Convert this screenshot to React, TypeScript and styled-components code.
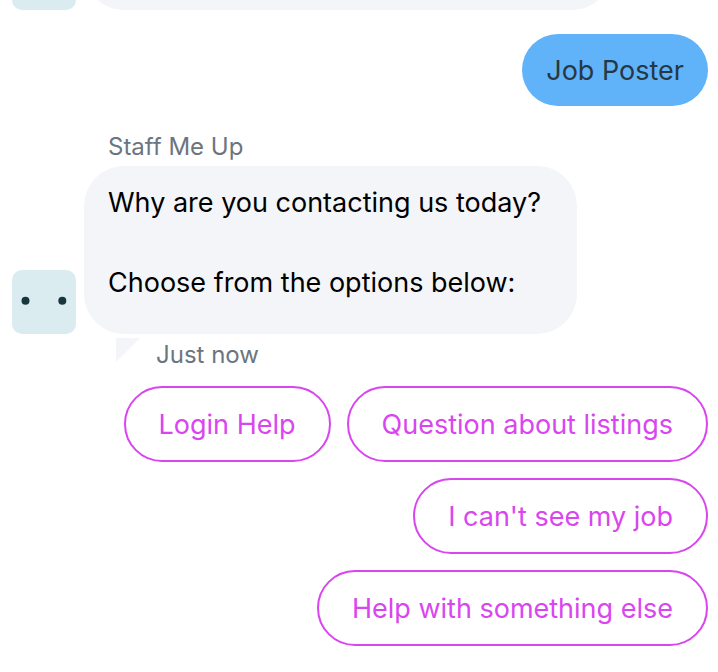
import React from "react";
import styled, { createGlobalStyle } from "styled-components";

const GlobalStyle = createGlobalStyle`
  * { box-sizing: border-box; }
  body { margin: 0; background: #fff; font-family: Inter, "Liberation Sans", sans-serif; }
`;

const Chat = styled.main`
  padding: 0 10px 24px 12px;
  overflow: hidden;
`;

const BotRow = styled.div`
  display: flex;
  align-items: flex-end;
  gap: 8px;
`;

const PreviousRow = styled(BotRow)`
  height: 10px;
`;

const Avatar = styled.div`
  width: 64px;
  height: 64px;
  flex: none;
  border-radius: 10px;
  background: #daecf0;
`;

const BotBubble = styled.div`
  padding: 17px 36px 31px 24px;
  border-radius: 40px;
  background: #f4f5f8;
  color: #000;
  font-size: 27px;
  line-height: 40px;
`;

const PreviousBubble = styled(BotBubble)`
  width: 528px;
  height: 80px;
`;

const Paragraph = styled.p`
  margin: 0;
  & + & { margin-top: 40px; }
`;

const UserRow = styled.div`
  display: flex;
  justify-content: flex-end;
  margin-top: 24px;
`;

const UserBubble = styled.div`
  padding: 17px 24px 15px;
  border-radius: 36px;
  background: #60b3f8;
  color: #263843;
  font-size: 27px;
  line-height: 40px;
`;

const Sender = styled.div`
  margin: 25px 0 3px 96px;
  color: #6b757f;
  font-size: 24px;
  line-height: 32px;
`;

const Footer = styled.div`
  display: flex;
  gap: 16px;
  margin: 4px 0 14px 104px;
`;

const Time = styled.span`
  color: #6b757f;
  font-size: 24px;
  line-height: 34px;
`;

const Replies = styled.div`
  display: flex;
  flex-wrap: wrap;
  justify-content: flex-end;
  gap: 16px;
`;

const Reply = styled.button`
  padding: 17px 33px 15px;
  border: 2px solid #d946ef;
  border-radius: 38px;
  background: #fff;
  color: #d946ef;
  font: inherit;
  font-size: 27px;
  line-height: 40px;
  cursor: pointer;
`;

const options = ["Login Help", "Question about listings", "I can't see my job", "Help with something else"];

function Face() {
  return (
    <svg width="64" height="64" viewBox="0 0 64 64" aria-hidden="true">
      <circle cx="13.5" cy="30.7" r="4" fill="#17363d" />
      <circle cx="50.3" cy="30.7" r="4" fill="#17363d" />
    </svg>
  );
}

export default function App() {
  return (
    <>
      <GlobalStyle />
      <Chat>
        <PreviousRow>
          <Avatar />
          <PreviousBubble />
        </PreviousRow>
        <UserRow><UserBubble>Job Poster</UserBubble></UserRow>
        <Sender>Staff Me Up</Sender>
        <BotRow>
          <Avatar><Face /></Avatar>
          <BotBubble>
            <Paragraph>Why are you contacting us today?</Paragraph>
            <Paragraph>Choose from the options below:</Paragraph>
          </BotBubble>
        </BotRow>
        <Footer>
          <svg width="24" height="24" viewBox="0 0 24 24" aria-hidden="true"><path d="M0 0H24L0 24Z" fill="#f4f5f8" /></svg>
          <Time>Just now</Time>
        </Footer>
        <Replies>
          {options.map((text) => <Reply key={text} type="button">{text}</Reply>)}
        </Replies>
      </Chat>
    </>
  );
}
